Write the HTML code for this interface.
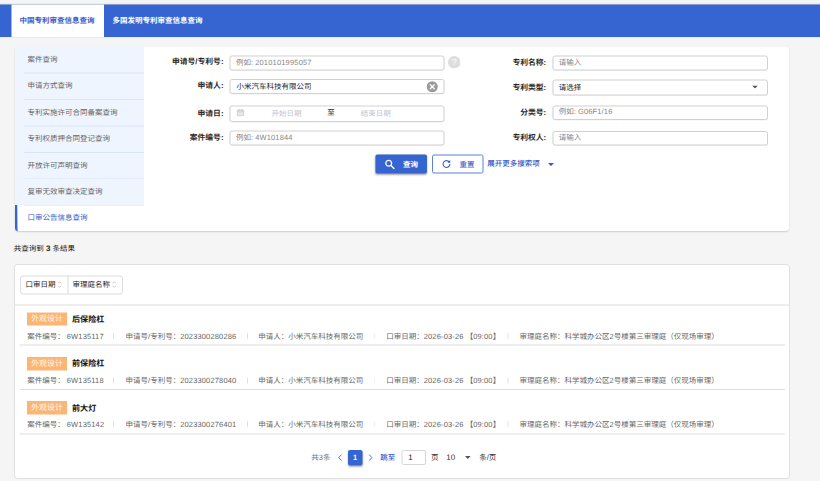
<!DOCTYPE html>
<html lang="zh-CN">
<head>
<meta charset="utf-8">
<title>中国专利审查信息查询</title>
<style>
*{box-sizing:border-box;margin:0;padding:0}
html,body{width:820px;height:481px;overflow:hidden;background:#f5f5f5}
body{position:relative;font-family:"Liberation Sans","Noto Sans CJK SC",sans-serif;font-size:15px;color:#333;line-height:1}
#root{text-rendering:geometricPrecision;position:absolute;left:0;top:0;width:1640px;height:962px;transform:scale(.5);transform-origin:0 0;background:#f5f5f5}
.abs{position:absolute}
.t{position:absolute;white-space:nowrap;line-height:20px;height:20px}
.b{font-weight:bold}
/* top bar */
#bar{left:0;top:9px;width:1640px;height:65px;background:#3664d1;box-shadow:0 -1px 3px rgba(0,0,0,.16)}
#tab1{left:22.5px;top:9px;width:185.5px;height:65px;background:#fff}
#tab1 .t{left:-1.5px;width:186px;text-align:center;top:23px;color:#3a5bc7;font-weight:bold}
#tab2{left:225px;top:32.4px;color:#fff;font-weight:bold}
/* search panel */
#panel{left:30px;top:93px;width:1548px;height:369px;background:#fff;border-radius:6px;box-shadow:0 1px 3px rgba(0,0,0,.17)}
#side{left:0;top:0;width:258px;height:369px;background:#eef5fe;border-radius:6px 0 0 6px}
.si{position:absolute;left:0;width:258px;height:52.85px}
.si .ln{z-index:2;position:absolute;left:18px;right:0;bottom:-1.2px;height:1.6px;background:#d8e5fa}
.si .t{left:25px;top:16.4px;color:#666}
.si.on{background:#fff;border-left:5px solid #3664d1;border-radius:0 0 0 6px}
.si.on .t{left:20px;color:#3559c7}
.lab{position:absolute;text-align:right;font-weight:bold;font-size:15.6px;color:#2a2a2a;white-space:nowrap;line-height:20px;height:20px}
.inp{position:absolute;border:2px solid #d1d1d1;border-radius:5px;background:#fff;box-shadow:0 1px 1px rgba(0,0,0,.06)}
.inp .t{left:11px;color:#868686}
.inp .t.v{color:#222}
/* results */
#card{left:28px;top:528px;width:1552px;height:429.5px;background:#fff;border:2px solid #e0e0e0;border-radius:7px}
.hl{position:absolute;height:2px;background:#dedede}
.tag{position:absolute;left:54px;width:80px;height:26.5px;background:#fbb574;color:#fff6ea;text-align:center;line-height:26.5px;font-size:15.8px;white-space:nowrap}
.ttl{position:absolute;left:144px;font-weight:bold;font-size:16.2px;color:#111;white-space:nowrap;line-height:20px}
.d{position:absolute;color:#666;white-space:nowrap;line-height:20px}
.n{letter-spacing:.3px}
.sep{position:absolute;width:1.5px;height:12px;background:#e0e0e0}
</style>
</head>
<body>
<div id="root">
<div id="bar" class="abs"></div>
<div id="tab1" class="abs"><div class="t">中国专利审查信息查询</div></div>
<div id="tab2" class="t">多国发明专利审查信息查询</div>

<div id="panel" class="abs">
  <div id="side" class="abs">
    <div class="si" style="top:0.0px"><div class="t">案件查询</div><div class="ln"></div></div>
    <div class="si" style="top:52.85px"><div class="t">申请方式查询</div><div class="ln"></div></div>
    <div class="si" style="top:105.7px"><div class="t">专利实施许可合同备案查询</div><div class="ln"></div></div>
    <div class="si" style="top:158.55px"><div class="t">专利权质押合同登记查询</div><div class="ln"></div></div>
    <div class="si" style="top:211.4px"><div class="t">开放许可声明查询</div><div class="ln"></div></div>
    <div class="si" style="top:264.25px"><div class="t">复审无效审查决定查询</div><div class="ln"></div></div>
    <div class="si on" style="top:317.1px;height:51.9px"><div class="t">口审公告信息查询</div></div>
  </div>
</div>

<!-- form left column -->
<div class="lab" style="left:290px;width:157px;top:114px">申请号/专利号:</div>
<div class="inp" style="left:459px;top:111px;width:430px;height:30px"><div class="t" style="top:1.5px">例如: <span class="n" style="letter-spacing:.35px">2010101995057</span></div></div>
<svg class="abs" style="left:896.4px;top:112.2px" width="25" height="25" viewBox="0 0 24 24"><circle cx="12" cy="12" r="12" fill="#dedede"/><text x="12" y="18.2" font-size="17" fill="#fff" text-anchor="middle" font-family="Liberation Sans, sans-serif">?</text></svg>

<div class="lab" style="left:290px;width:157px;top:162px">申请人:</div>
<div class="inp" style="left:459px;top:157.5px;width:430px;height:30px"><div class="t v" style="top:4.3px;left:12px">小米汽车科技有限公司</div></div>
<svg class="abs" style="left:852.7px;top:162px" width="23" height="23" viewBox="0 0 24 24"><circle cx="12" cy="12" r="11.5" fill="#9a9a9a"/><path d="M7.8 7.8L16.2 16.2M16.2 7.8L7.8 16.2" stroke="#fff" stroke-width="2.6" stroke-linecap="round"/></svg>

<div class="lab" style="left:290px;width:157px;top:217px">申请日:</div>
<div class="inp" style="left:459px;top:211px;width:430px;height:32.5px">
  <svg class="abs" style="left:11.5px;top:3.5px" width="16" height="16" viewBox="0 0 16 16"><rect x="1.5" y="3" width="13" height="11.5" rx="1.5" fill="#e6e8ee" stroke="#c3c7cf" stroke-width="1.6"/><path d="M1.5 6.5H14.5M5 1V4.5M11 1V4.5" stroke="#c3c7cf" stroke-width="1.6"/></svg>
  <div class="t" style="left:82px;top:3.5px;color:#c0c4cc">开始日期</div>
  <div class="t" style="left:193.6px;top:3px;color:#333">至</div>
  <div class="t" style="left:260.5px;top:3.5px;color:#c0c4cc">结束日期</div>
</div>

<div class="lab" style="left:290px;width:157px;top:265.5px">案件编号:</div>
<div class="inp" style="left:459px;top:261px;width:430px;height:30px"><div class="t" style="top:3px">例如: <span class="n">4W101844</span></div></div>

<!-- form right column -->
<div class="lab" style="left:935.4px;width:157px;top:115px">专利名称:</div>
<div class="inp" style="left:1104.5px;top:110.5px;width:431.5px;height:30px"><div class="t" style="top:3.5px">请输入</div></div>

<div class="lab" style="left:935.4px;width:157px;top:164.6px">专利类型:</div>
<div class="inp" style="left:1104.5px;top:158.5px;width:431.5px;height:32px"><div class="t v" style="top:4.8px">请选择</div>
  <svg class="abs" style="left:397px;top:10.4px" width="12" height="6.4" viewBox="0 0 10 5"><path d="M0 0H10L5 5Z" fill="#555"/></svg>
</div>

<div class="lab" style="left:935.4px;width:157px;top:214.5px">分类号:</div>
<div class="inp" style="left:1104.5px;top:210.5px;width:431.5px;height:29px"><div class="t" style="top:1.7px">例如: <span class="n">G06F1/16</span></div></div>

<div class="lab" style="left:935.4px;width:157px;top:266px">专利权人:</div>
<div class="inp" style="left:1104.5px;top:261.5px;width:431.5px;height:29.5px"><div class="t" style="top:2.4px">请输入</div></div>

<!-- buttons -->
<div class="abs" style="left:751px;top:309px;width:102.6px;height:38px;background:#3664d1;border-radius:4px;box-shadow:0 2px 4px rgba(0,0,0,.35)">
  <svg class="abs" style="left:18px;top:8.6px" width="21" height="21" viewBox="0 0 20 20"><circle cx="8" cy="8" r="5.6" fill="none" stroke="#fff" stroke-width="2.4"/><path d="M12.2 12.2L18 18" stroke="#fff" stroke-width="2.6" stroke-linecap="round"/></svg>
  <div class="t b" style="left:55px;top:10.2px;color:#fff">查询</div>
</div>
<div class="abs" style="left:864px;top:309px;width:103px;height:38px;background:#fff;border:2px solid #5b80da;border-radius:4px">
  <svg class="abs" style="left:17px;top:7px" width="20" height="20" viewBox="0 0 20 20"><path d="M15.6 6.2A6.8 6.8 0 1 0 16.8 10" fill="none" stroke="#3a5bc7" stroke-width="2.2"/><path d="M17.5 1.8V7.6H11.7Z" fill="#3a5bc7"/></svg>
  <div class="t" style="left:53px;top:7.8px;color:#4668c8;font-weight:500">重置</div>
</div>
<div class="t" style="left:974.4px;top:317.4px;color:#3a5bc7;font-weight:500">展开更多搜索项</div>
<svg class="abs" style="left:1096.4px;top:326px" width="12" height="6.4" viewBox="0 0 10 5"><path d="M0 0H10L5 5Z" fill="#3a5bc7"/></svg>

<!-- result count -->
<div class="t" style="left:27.6px;top:487px;color:#222">共查询到 <b style="font-size:16px">3</b> 条结果</div>

<!-- results card -->
<div id="card" class="abs"></div>
<div class="abs" style="left:40px;top:551px;width:206px;height:38px;border:2px solid #dcdcdc;border-radius:6px;background:#fff"></div>
<div class="abs" style="left:135px;top:552px;width:2px;height:36px;background:#dcdcdc"></div>
<div class="t" style="left:50.8px;top:558.6px;color:#222">口审日期</div>
<div class="t" style="left:145px;top:558.6px;color:#222">审理庭名称</div>
<svg class="abs" style="left:114.5px;top:560.6px" width="9" height="16" viewBox="0 0 9 16"><path d="M1 5.2L4.5 2.8L8 5.2M1 10.8L4.5 13.2L8 10.8" fill="none" stroke="#c2c2c2" stroke-width="1.6"/></svg>
<svg class="abs" style="left:224.3px;top:560.6px" width="9" height="16" viewBox="0 0 9 16"><path d="M1 5.2L4.5 2.8L8 5.2M1 10.8L4.5 13.2L8 10.8" fill="none" stroke="#c2c2c2" stroke-width="1.6"/></svg>
<div class="hl" style="left:30px;top:609px;width:1548px"></div>

<!-- row 1 -->
<div class="tag" style="top:624.6px">外观设计</div>
<div class="ttl" style="top:628.6px">后保险杠</div>
<div class="d" style="left:54.4px;top:663.0px">案件编号： <span class="n">6W135117</span></div><div class="sep" style="left:226px;top:665.5px"></div>
<div class="d" style="left:251.2px;top:663.0px">申请号/专利号：<span class="n">2023300280286</span></div><div class="sep" style="left:494px;top:665.5px"></div>
<div class="d" style="left:516.6px;top:663.0px">申请人：小米汽车科技有限公司</div><div class="sep" style="left:748.5px;top:665.5px"></div>
<div class="d" style="left:772.4px;top:663.0px">口审日期：<span class="n">2026-03-26</span> 【<span class="n">09:00</span>】</div><div class="sep" style="left:1015px;top:665.5px"></div>
<div class="d" style="left:1039px;top:663.0px">审理庭名称：科学城办公区2号楼第三审理庭（仅现场审理）</div>
<div class="hl" style="left:39px;top:688.6px;width:1531px"></div>

<!-- row 2 -->
<div class="tag" style="top:714.0px">外观设计</div>
<div class="ttl" style="top:717.2px">前保险杠</div>
<div class="d" style="left:54.4px;top:752.1px">案件编号： <span class="n">6W135118</span></div><div class="sep" style="left:226px;top:754.6px"></div>
<div class="d" style="left:251.2px;top:752.1px">申请号/专利号：<span class="n">2023300278040</span></div><div class="sep" style="left:494px;top:754.6px"></div>
<div class="d" style="left:516.6px;top:752.1px">申请人：小米汽车科技有限公司</div><div class="sep" style="left:748.5px;top:754.6px"></div>
<div class="d" style="left:772.4px;top:752.1px">口审日期：<span class="n">2026-03-26</span> 【<span class="n">09:00</span>】</div><div class="sep" style="left:1015px;top:754.6px"></div>
<div class="d" style="left:1039px;top:752.1px">审理庭名称：科学城办公区2号楼第三审理庭（仅现场审理）</div>
<div class="hl" style="left:39px;top:778.0px;width:1531px"></div>

<!-- row 3 -->
<div class="tag" style="top:802.4px">外观设计</div>
<div class="ttl" style="top:806.4px">前大灯</div>
<div class="d" style="left:54.4px;top:839.3px">案件编号： <span class="n">6W135142</span></div><div class="sep" style="left:226px;top:841.8px"></div>
<div class="d" style="left:251.2px;top:839.3px">申请号/专利号：<span class="n">2023300276401</span></div><div class="sep" style="left:494px;top:841.8px"></div>
<div class="d" style="left:516.6px;top:839.3px">申请人：小米汽车科技有限公司</div><div class="sep" style="left:748.5px;top:841.8px"></div>
<div class="d" style="left:772.4px;top:839.3px">口审日期：<span class="n">2026-03-26</span> 【<span class="n">09:00</span>】</div><div class="sep" style="left:1015px;top:841.8px"></div>
<div class="d" style="left:1039px;top:839.3px">审理庭名称：科学城办公区2号楼第三审理庭（仅现场审理）</div>
<div class="hl" style="left:39px;top:867.4px;width:1531px"></div>

<!-- pagination -->
<div class="t" style="left:622.6px;top:904.8px;color:#767676">共3条</div>
<svg class="abs" style="left:676.4px;top:907.6px" width="8.4" height="14.4" viewBox="0 0 7 12"><path d="M6 1L1.2 6L6 11" fill="none" stroke="#3664d1" stroke-width="1.55"/></svg>
<div class="abs" style="left:695.6px;top:900.4px;width:29.4px;height:30.8px;background:#3664d1;border-radius:4px;box-shadow:0 2px 4px rgba(0,0,0,.3)"><div class="t b" style="left:0;width:29.4px;text-align:center;top:5.6px;color:#fff">1</div></div>
<svg class="abs" style="left:736.8px;top:907.6px" width="8.4" height="14.4" viewBox="0 0 7 12"><path d="M1 1L5.8 6L1 11" fill="none" stroke="#3664d1" stroke-width="1.55"/></svg>
<div class="t" style="left:760.4px;top:904.8px;color:#3a5bc7;font-weight:500">跳至</div>
<div class="abs" style="left:802.8px;top:900.2px;width:49.6px;height:30px;border:2px solid #d6d6d6;border-radius:4px;background:#fff"><div class="t" style="left:11.6px;top:2.4px;color:#222;font-size:16px">1</div></div>
<div class="t" style="left:862px;top:904.8px;color:#333">页</div>
<div class="t" style="left:892.4px;top:904.8px;color:#333;font-size:16px">10</div>
<svg class="abs" style="left:930.4px;top:912.4px" width="11.2" height="6" viewBox="0 0 10 5"><path d="M0 0H10L5 5Z" fill="#555"/></svg>
<div class="t" style="left:958.4px;top:904.8px;color:#333">条/页</div>
</div>
</body>
</html>
